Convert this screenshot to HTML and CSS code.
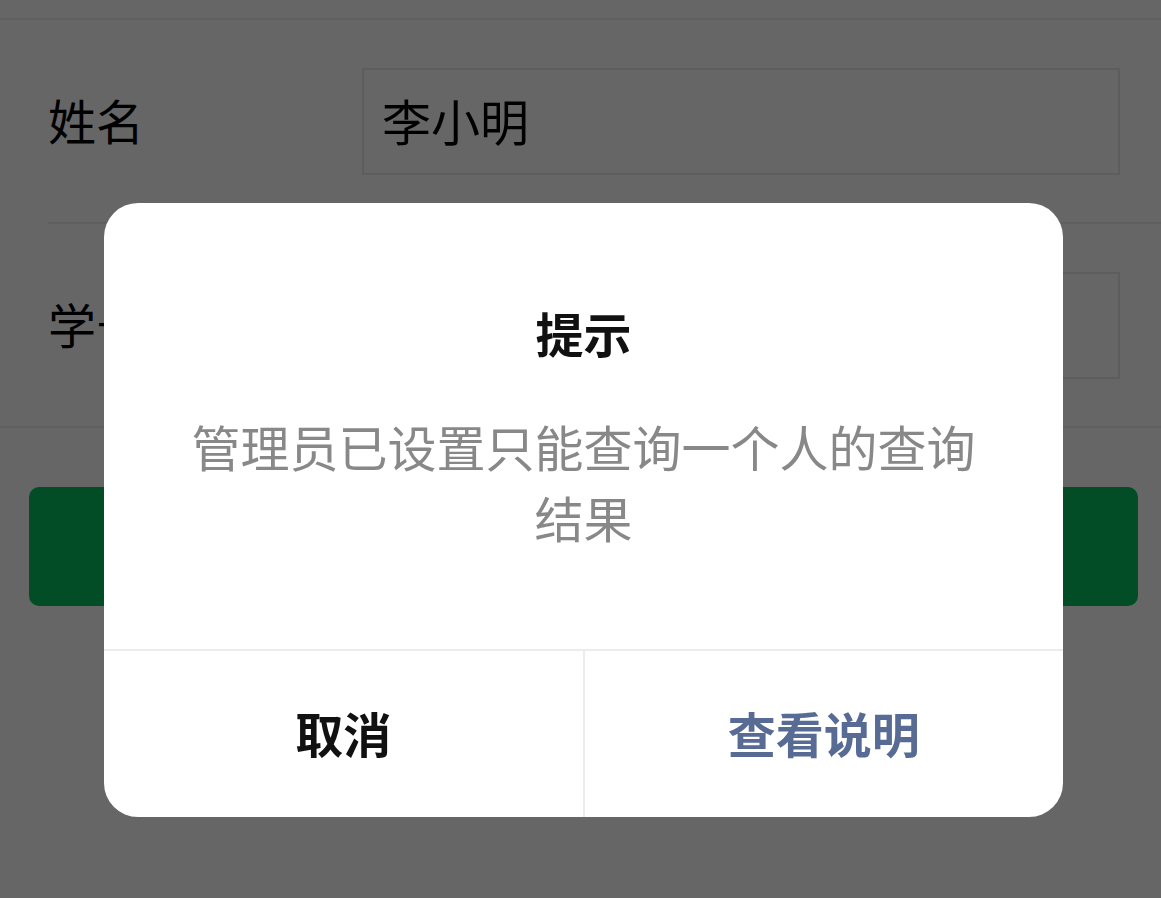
FILE: index.html
```html
<!DOCTYPE html>
<html lang="zh-CN">
<head>
<meta charset="utf-8">
<title>查询</title>
<link rel="stylesheet" href="styles.css">
</head>
<body>
<div class="page">
  <div class="topbar"></div>
  <div class="form">
    <div class="row">
      <div class="label">姓名</div>
      <div class="input">李小明</div>
    </div>
    <div class="row">
      <div class="label">学号</div>
      <div class="input"></div>
    </div>
  </div>
  <div class="submit"></div>
</div>
<div class="mask">
  <div class="dialog">
    <div class="dialog-body">
      <div class="title">提示</div>
      <div class="message">管理员已设置只能查询一个人的查询结果</div>
    </div>
    <div class="dialog-footer">
      <div class="btn btn-cancel">取消</div>
      <div class="btn btn-primary">查看说明</div>
    </div>
  </div>
</div>
</body>
</html>
```
FILE: styles.css
```css
html, body {
  margin: 0;
  padding: 0;
  background: #ffffff;
  font-family: "Noto Sans CJK SC", "Noto Sans", sans-serif;
}
.page {
  width: 1161px;
  height: 898px;
  background: #ffffff;
}
.topbar {
  height: 18px;
  border-bottom: 2px solid #ededed;
}
.form {
  border-bottom: 2px solid #ededed;
}
.row {
  display: flex;
  align-items: center;
  height: 202px;
  margin-left: 48px;
  padding-right: 41px;
}
.row + .row {
  border-top: 2px solid #ededed;
}
.label {
  width: 314px;
  font-size: 48px;
  line-height: 1;
  padding-bottom: 4px;
  color: #000;
}
.input {
  flex: 1;
  box-sizing: border-box;
  height: 107px;
  border: 2px solid #e8e8e8;
  padding: 0 0 4px 18px;
  display: flex;
  align-items: center;
  font-size: 49px;
  color: #000;
}
.submit {
  margin: 59px 23px 0 29px;
  height: 119px;
  border-radius: 10px;
  background: #07c160;
}
.mask {
  position: fixed;
  inset: 0;
  background: rgba(0, 0, 0, 0.6);
  display: flex;
  align-items: flex-start;
  padding: 203px 0 0 104px;
}
.dialog {
  width: 959px;
  height: 614px;
  background: #ffffff;
  border-radius: 34px;
  display: flex;
  flex-direction: column;
  overflow: hidden;
}
.dialog-body {
  flex: 1;
  padding: 95px 80px 0;
  text-align: center;
}
.title {
  font-size: 48px;
  line-height: 68px;
  font-weight: 700;
  color: #111;
}
.message {
  margin-top: 44px;
  font-size: 49px;
  line-height: 71px;
  color: #888;
}
.dialog-footer {
  height: 166px;
  border-top: 2px solid #ececec;
  display: flex;
}
.btn {
  flex: 1;
  display: flex;
  align-items: center;
  justify-content: center;
  font-size: 48px;
  font-weight: 700;
  padding-bottom: 4px;
}
.btn-cancel {
  color: #111;
}
.btn-primary {
  color: #576b95;
  border-left: 2px solid #ececec;
}
```
